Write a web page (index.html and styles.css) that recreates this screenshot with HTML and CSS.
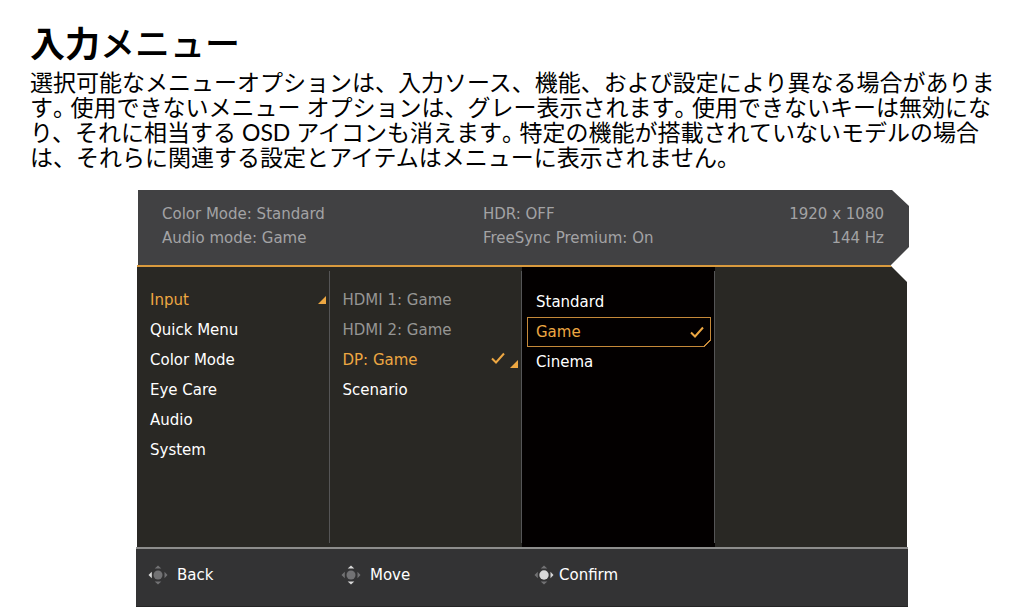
FILE: index.html
```html
<!DOCTYPE html>
<html lang="ja">
<head>
<meta charset="utf-8">
<title>入力メニュー</title>
<link rel="stylesheet" href="styles.css">
</head>
<body>
<svg class="symbols" aria-hidden="true">
  <symbol id="check" viewBox="0 0 14 12"><path d="M1 6.5 5 10.5 13 1.5" fill="none" stroke="currentColor" stroke-width="2"/></symbol>
  <symbol id="corner" viewBox="0 0 8 8"><path d="M8 0V8H0Z" fill="currentColor"/></symbol>
</svg>
<main class="page">
  <h1 class="title">入力<span class="kana">メニュー</span></h1>
  <p class="intro">選択可能なメニューオプションは、入力ソース、機能、および設定により異なる場合がありま<br>す<span class="stop">。</span>使用できないメニュー オプションは、グレー表示されます<span class="stop">。</span>使用できないキーは無効にな<br>り、それに相当する OSD アイコンも消えます<span class="stop">。</span>特定の機能が搭載されていないモデルの場合<br>は、それらに関連する設定とアイテムはメニューに表示されません。</p>

  <section class="osd" lang="en">
    <header class="status">
      <div class="status-group">Color Mode: Standard<br>Audio mode: Game</div>
      <div class="status-group">HDR: OFF<br>FreeSync Premium: On</div>
      <div class="status-group status-end">1920 x 1080<br>144 Hz</div>
    </header>
    <nav class="menu">
      <div class="column">
        <button class="item active">Input <span class="marks"><svg class="corner"><use href="#corner"/></svg></span></button>
        <button class="item">Quick Menu</button>
        <button class="item">Color Mode</button>
        <button class="item">Eye Care</button>
        <button class="item">Audio</button>
        <button class="item">System</button>
      </div>
      <div class="column">
        <button class="item muted">HDMI 1: Game</button>
        <button class="item muted">HDMI 2: Game</button>
        <button class="item active">DP: Game <span class="marks"><svg class="check"><use href="#check"/></svg><svg class="corner"><use href="#corner"/></svg></span></button>
        <button class="item">Scenario</button>
      </div>
      <div class="column options">
        <button class="item">Standard</button>
        <button class="item active selected">Game <svg class="check"><use href="#check"/></svg></button>
        <button class="item">Cinema</button>
      </div>
      <div class="column"></div>
    </nav>
    <footer class="keys">
      <button class="key">
        <svg class="pad" viewBox="0 0 20 20"><circle class="dim" cx="10" cy="10" r="4.5"/><path class="dim" d="M10 .5 13.3 3.5H6.7ZM10 19.5 13.3 16.5H6.7ZM19.5 10 16.5 6.7V13.3Z"/><path class="lit" d="M.5 10 3.8 6.7V13.3Z"/></svg>
        Back</button>
      <button class="key">
        <svg class="pad" viewBox="0 0 20 20"><circle class="dim" cx="10" cy="10" r="4.5"/><path class="dim" d="M.5 10 3.8 6.7V13.3ZM19.5 10 16.5 6.7V13.3Z"/><path class="lit" d="M10 .5 13.3 3.5H6.7ZM10 19.5 13.3 16.5H6.7Z"/></svg>
        Move</button>
      <button class="key confirm">
        <svg class="pad" viewBox="0 0 20 20"><path class="dim" d="M10 .5 13.3 3.5H6.7ZM10 19.5 13.3 16.5H6.7ZM.5 10 3.8 6.7V13.3Z"/><circle class="lit" cx="10" cy="10" r="4.7"/><path class="lit" d="M19.5 10 16.5 6.7V13.3Z"/></svg>
        Confirm</button>
    </footer>
  </section>
</main>
</body>
</html>
```
FILE: styles.css
```css
* { box-sizing: border-box; }
body { margin: 0; background: #fff; color: #000; }
.symbols { display: none; }
.page { padding-top: 18px; }
.title {
  margin: 0 30px;
  font: 700 35px/48px "Noto Sans CJK JP", sans-serif;
}
.kana { font-weight: 500; }
.intro {
  margin: 4px 0 0 30px;
  font: 400 23px/25px Lato, "Noto Sans CJK JP", sans-serif;
  white-space: nowrap;
}
.stop { margin-right: 6px; font-feature-settings: "halt"; }
.osd {
  margin: 20px 115px 0 136px;
  font: 400 15px/24px "DejaVu Sans", sans-serif;
}
.status {
  display: grid;
  grid-template-columns: 4fr 3fr 2fr;
  margin-left: 2px;
  padding: 12px 25px 15px 24px;
  background: #414143;
  color: #a3a3a5;
  clip-path: polygon(0 0, calc(100% - 17px) 0, 100% 16px, 100% calc(100% - 18px), calc(100% - 18px) 100%, 0 100%);
}
.status-end { text-align: right; }
.menu {
  display: grid;
  grid-template-columns: repeat(4, 1fr);
  min-height: 282px;
  margin: 0 2px 0 1px;
  background: #292824;
  border-top: 2px solid #d99a3e;
  clip-path: polygon(0 0, calc(100% - 17px) 0, 100% 17px, 100% 100%, 0 100%);
}
.column {
  display: flex;
  flex-direction: column;
  padding: 18px 4px 0 13px;
  background: linear-gradient(#555556, #555556) right 4px / 1px calc(100% - 8px) no-repeat;
}
.column:last-child { background: none; }
.options {
  padding: 20px 4px 0 5px;
  background-color: #030000;
}
.item, .key {
  display: flex;
  align-items: center;
  border: 0;
  background: none;
  color: #fff;
  font: inherit;
  text-align: left;
  cursor: pointer;
}
.item {
  justify-content: space-between;
  min-height: 30px;
  padding: 0;
}
.muted { color: #969694; }
.active { color: #eda742; }
.options .item { padding: 0 7px 0 9px; }
.options .selected {
  background:
    linear-gradient(#c58939, #c58939) 0 0 / 100% 1px no-repeat,
    linear-gradient(#c58939, #c58939) 0 0 / 1px 100% no-repeat,
    linear-gradient(#c58939, #c58939) 0 100% / calc(100% - 8px) 1px no-repeat,
    linear-gradient(#c58939, #c58939) 100% 0 / 1px calc(100% - 8px) no-repeat,
    linear-gradient(135deg, transparent 47%, #c58939 47%, #c58939 57%, transparent 57%) 100% 100% / 8px 8px no-repeat;
}
.check { width: 14px; height: 12px; }
.corner { width: 8px; height: 8px; }
.marks { display: flex; align-items: flex-end; gap: 5px; }
.marks .check { margin-bottom: 4px; }
.keys {
  display: grid;
  grid-template-columns: repeat(4, 1fr);
  min-height: 60px;
  margin-right: 1px;
  border-top: 2px solid #8d8d8c;
  border-bottom: 1px solid #252525;
  background: #333334;
}
.key { gap: 9px; padding: 0 0 5px 12px; }
.key.confirm { gap: 5px; }
.pad { width: 20px; height: 20px; }
.dim { fill: #727274; }
.lit { fill: #d8d8d8; }
```
